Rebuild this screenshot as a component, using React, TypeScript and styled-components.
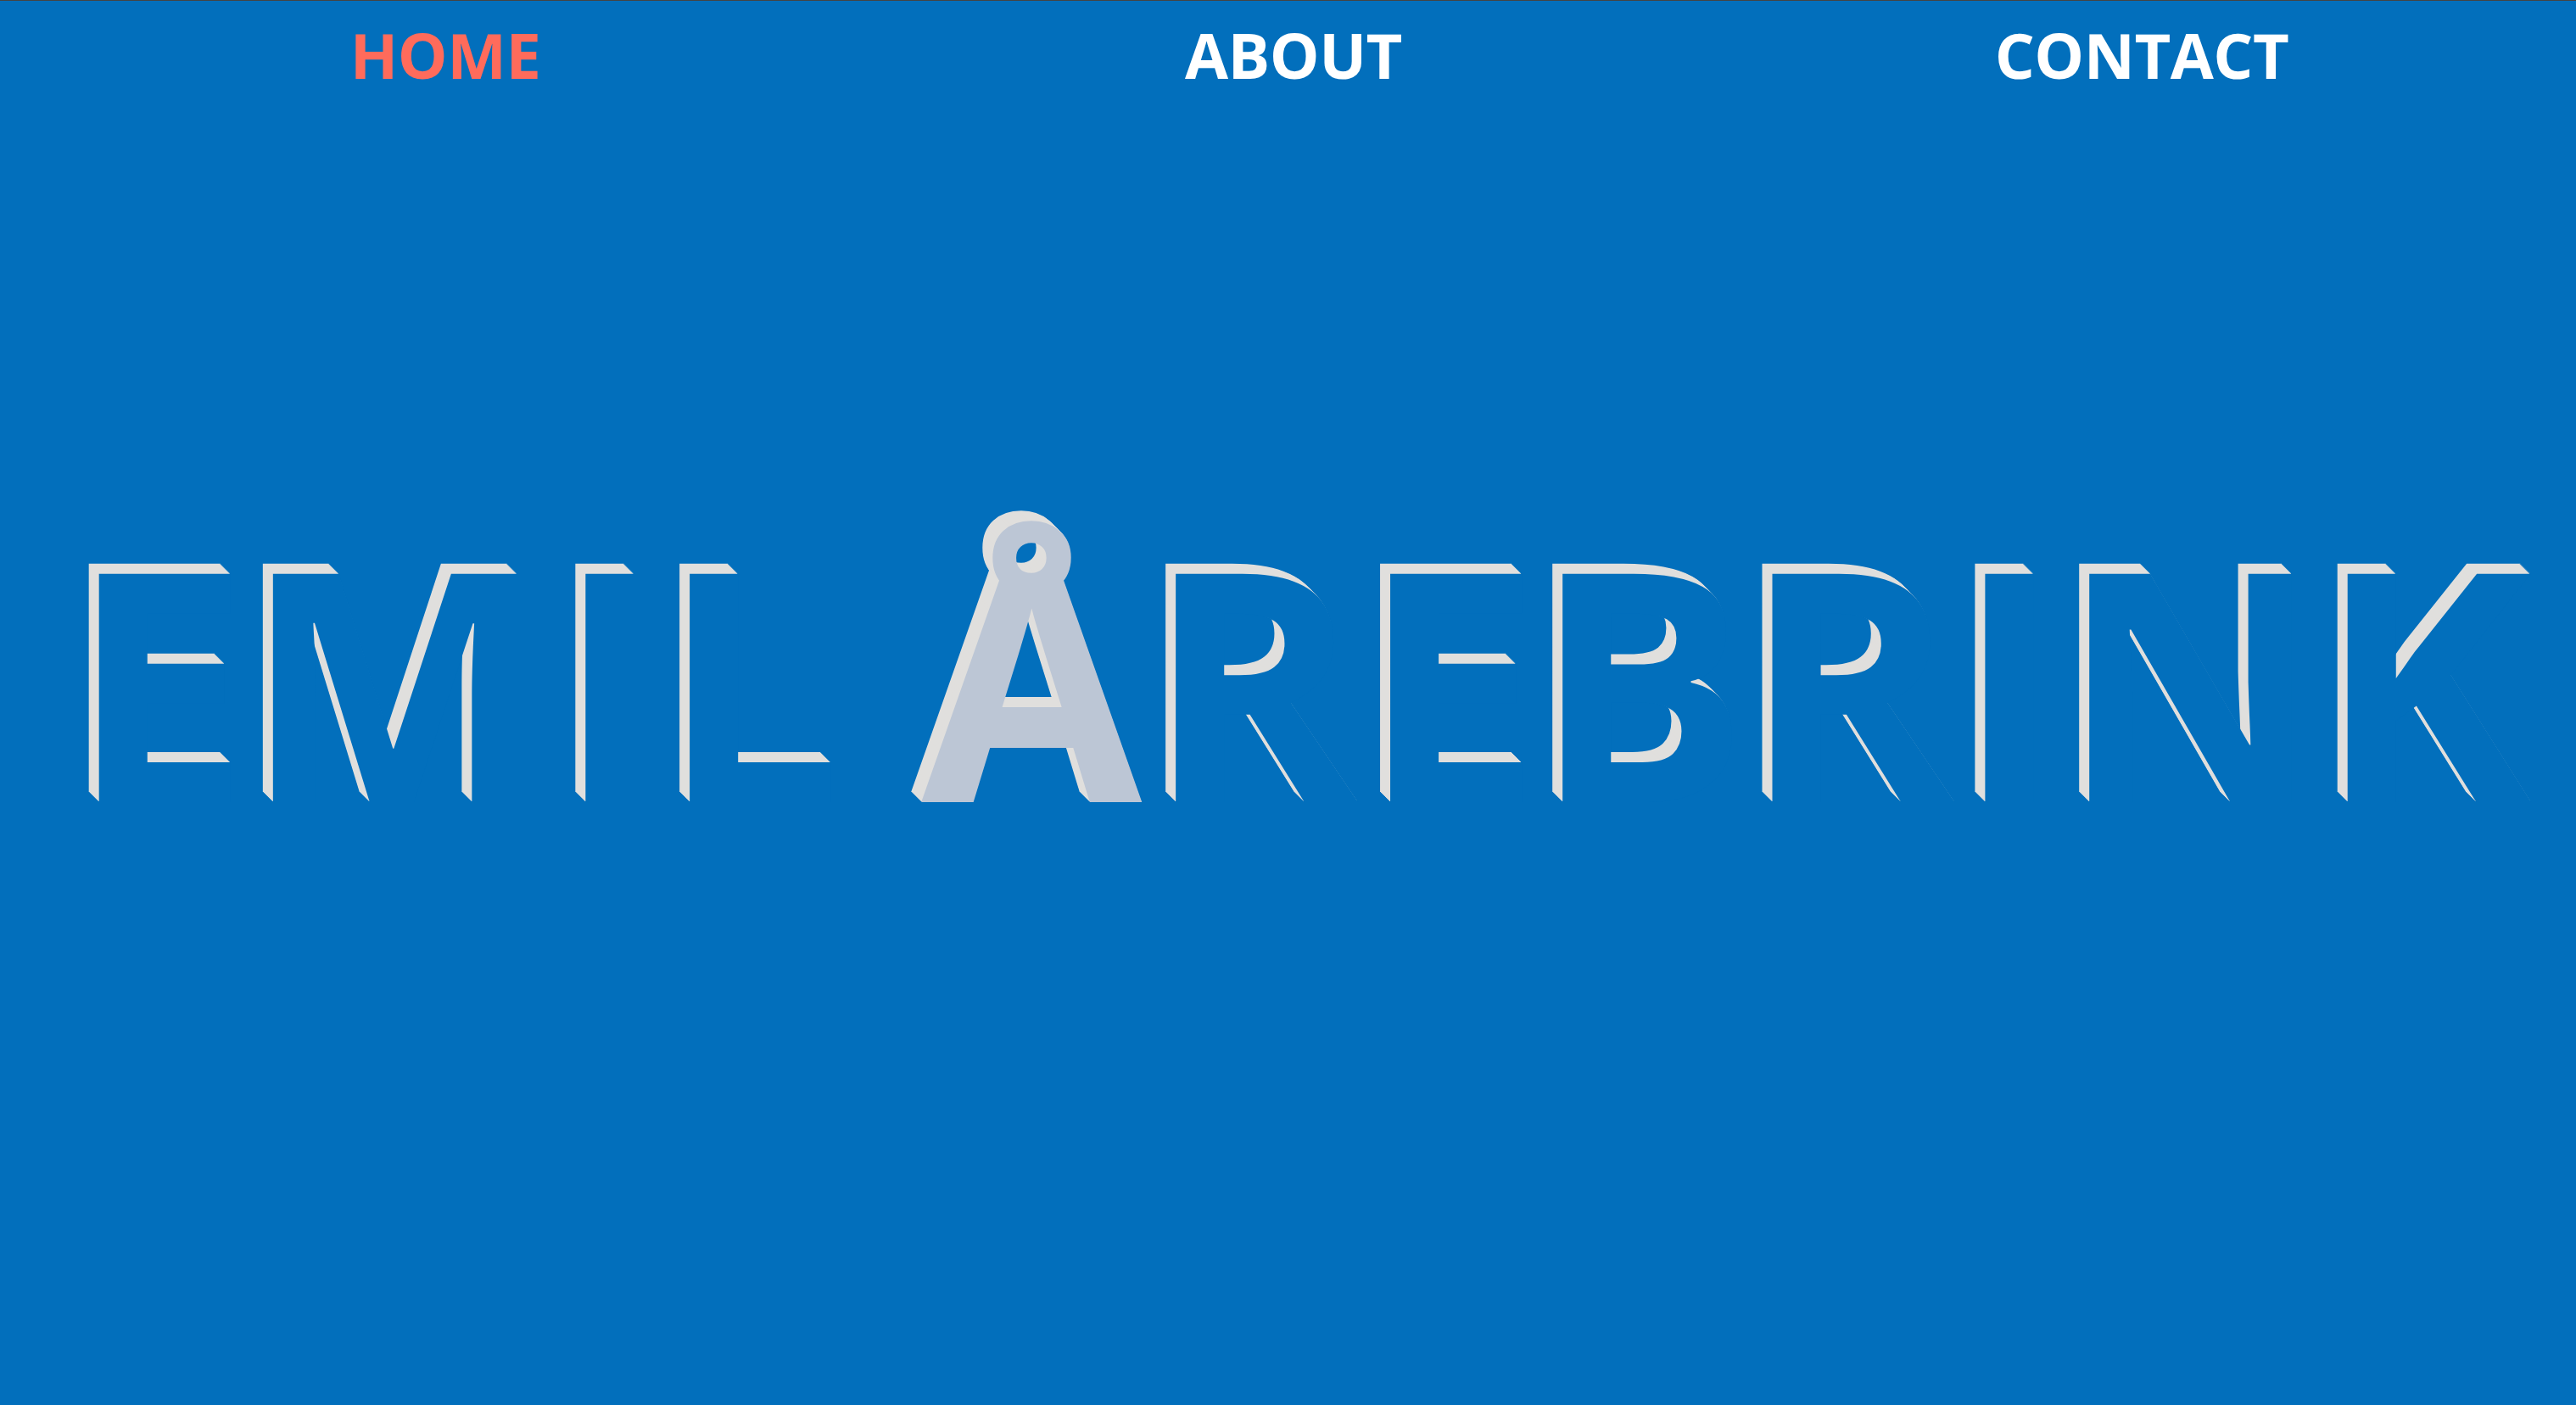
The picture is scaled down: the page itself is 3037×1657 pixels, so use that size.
import styled, { createGlobalStyle } from "styled-components";

const BLUE = "#026fbc";

// stacked shadows so the title looks extruded towards the top left
const extrude = Array.from({ length: 12 }, (_, i) => {
  const step = i + 1;
  return `${-step}px ${-step}px 0 #e0dfdd`;
}).join(", ");

// letter by letter spacing of the title, in px
const titleLetters: { char: string; kern?: number; accent?: boolean }[] = [
  { char: "E" },
  { char: "M", kern: -6 },
  { char: "I", kern: 13 },
  { char: "L", kern: -2 },
  { char: " " },
  { char: "Å", kern: -4, accent: true },
  { char: "R", kern: 6 },
  { char: "E", kern: 4 },
  { char: "B", kern: -8 },
  { char: "R", kern: -6 },
  { char: "I", kern: 2 },
  { char: "N", kern: -2 },
  { char: "K", kern: -2 },
];

const GlobalStyle = createGlobalStyle`
  html, body {
    margin: 0;
    background: ${BLUE};
  }
`;

const Page = styled.div`
  height: 1657px;
  overflow: hidden;
  background: ${BLUE};
  border-top: 1px solid #444;
  box-sizing: border-box;
  font-family: "Open Sans", "Noto Sans", sans-serif;
`;

const Nav = styled.nav`
  display: grid;
  grid-template-columns: repeat(3, 1000px);
  padding: 0 0 0 25px;
`;

const NavLink = styled.a<{ $active?: boolean }>`
  text-align: center;
  font-size: 74px;
  font-weight: 700;
  letter-spacing: -0.5px;
  line-height: 127px;
  color: ${(p) => (p.$active ? "#ff6b5b" : "#fff")};
`;

const Title = styled.h1`
  margin: 0;
  padding: 322px 0 0 30px;
  text-align: center;
  white-space: pre;
  font-size: 377px;
  font-weight: 700;
  line-height: 700px;
  color: ${BLUE};
  text-shadow: ${extrude};
`;

const Letter = styled.span<{ $kern?: number; $accent?: boolean }>`
  margin-left: ${(p) => p.$kern ?? 0}px;
  color: ${(p) => (p.$accent ? "#bcc6d5" : "inherit")};
`;

export default function App() {
  return (
    <Page>
      <GlobalStyle />
      <Nav>
        <NavLink $active>HOME</NavLink>
        <NavLink>ABOUT</NavLink>
        <NavLink>CONTACT</NavLink>
      </Nav>
      <Title>
        {titleLetters.map((letter, i) => (
          <Letter key={i} $kern={letter.kern} $accent={letter.accent}>
            {letter.char}
          </Letter>
        ))}
      </Title>
    </Page>
  );
}
